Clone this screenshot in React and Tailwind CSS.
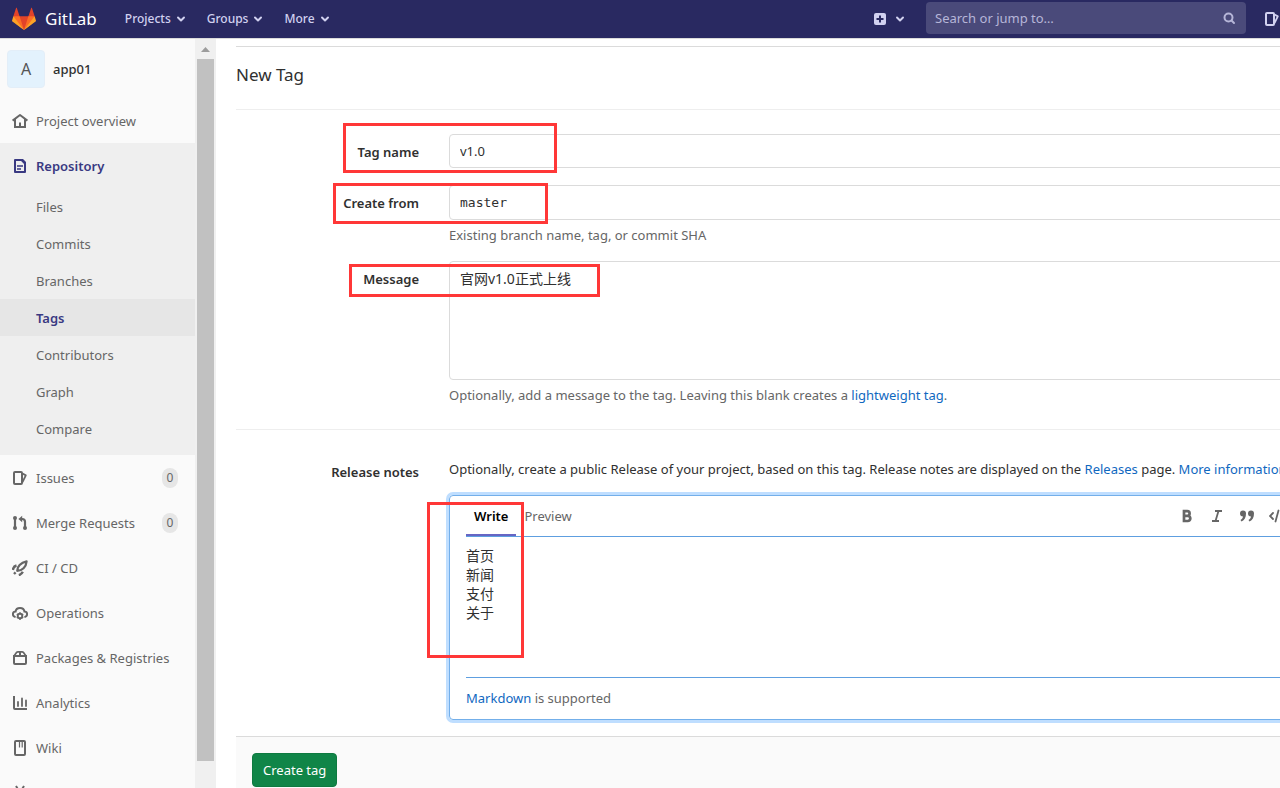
import React, { useState } from 'react';
import clsx from 'clsx';

const Icon = ({ children, className = 'size-4' }) => (
  <svg viewBox="0 0 16 16" className={clsx('shrink-0', className)} fill="none" stroke="currentColor" strokeWidth="2" aria-hidden="true">
    {children}
  </svg>
);

const icons = {
  home: (
    <>
      <path d="M0.6 7.6 8 2l7.4 5.6" strokeLinejoin="round" />
      <path d="M3 6v8h10V6" />
      <path d="M8 9.5V14" />
    </>
  ),
  doc: (
    <>
      <path d="M3 2h6.5L13 5.5V14H3z" strokeLinejoin="round" />
      <path d="M5 8h6M5 11h4" strokeWidth="1.6" />
      <path d="M9 1l5 5V4l-3-3z" fill="currentColor" stroke="none" />
    </>
  ),
  issues: (
    <>
      <rect x="2" y="2" width="8" height="12" rx="1" />
      <path d="M10.500 3.500l3.300 1.900-3.300 6.800" strokeWidth="1.800" strokeLinejoin="round" />
    </>
  ),
  merge: (
    <>
      <path d="M3 4v8M8 4h2.2C12 4 13 5 13 6.800V12" strokeWidth="2.200" />
      <path d="M10.200 0.800v6.400L6.400 4z" fill="currentColor" stroke="none" />
      <circle cx="3" cy="3" r="2" fill="currentColor" stroke="none" />
      <circle cx="3" cy="13" r="2" fill="currentColor" stroke="none" />
      <circle cx="13" cy="13" r="2" fill="currentColor" stroke="none" />
    </>
  ),
  rocket: (
    <>
      <path d="M5.200 10.800C5.200 7 8.500 2.400 14.600 1.400 14.200 7 10 10.800 5.200 10.800z" strokeWidth="2.200" strokeLinejoin="round" />
      <path d="M4.500 5.500C2.500 6 1.200 7.500 0.800 10M10.800 11.800C10 13.500 9 14.600 6.800 15.200M3.600 12.400L2 14" strokeWidth="2.400" />
    </>
  ),
  cloud: (
    <>
      <path d="M2.800 11.800C-0.200 10.500 0.600 6.500 3.600 6.500 4.200 1.700 11.800 1.700 12.400 6.500c3 0 3.800 4 .8 5.300" strokeLinecap="round" />
      <circle cx="8" cy="11" r="2.300" strokeWidth="1.900" />
      <path d="M8 7.300v1.500M8 13.300v1.700M4.800 9.200l1.300.7M9.900 12.100l1.300.7M4.800 12.800l1.300-.7M9.900 9.900l1.300-.7" strokeWidth="1.500" />
    </>
  ),
  package: (
    <>
      <path d="M2 6h12v7a1 1 0 0 1-1 1H3a1 1 0 0 1-1-1z" />
      <path d="M2 6l2.500-3.500C5 1.800 5.500 1.800 6 1.800h4c.5 0 1 0 1.500.7L14 6" strokeWidth="1.700" />
      <path d="M8 2v4" />
    </>
  ),
  chart: (
    <>
      <path d="M2 1v12a1 1 0 0 0 1 1h12" />
      <path d="M6 7v4M10 3.500V11M14 5.500V11" strokeLinecap="round" strokeWidth="1.800" />
    </>
  ),
  book: (
    <>
      <rect x="3" y="1" width="10" height="14" rx="1" />
      <path d="M7.500 1.500V7.500M10.200 1.500V7.500" strokeWidth="1.200" />
    </>
  ),
  snippet: (
    <>
      <path d="M4 1l6 10M12 1L6 11" />
      <circle cx="4" cy="13" r="2" />
      <circle cx="12" cy="13" r="2" />
    </>
  ),
};

const repoLinks = ['Files', 'Commits', 'Branches', 'Tags', 'Contributors', 'Graph', 'Compare'];

const lowerLinks = [
  { label: 'Issues', icon: 'issues', count: 0 },
  { label: 'Merge Requests', icon: 'merge', count: 0 },
  { label: 'CI / CD', icon: 'rocket' },
  { label: 'Operations', icon: 'cloud' },
  { label: 'Packages & Registries', icon: 'package' },
  { label: 'Analytics', icon: 'chart' },
  { label: 'Wiki', icon: 'book' },
];

const Tanuki = () => (
  <svg viewBox="0 0 36 36" className="size-6" aria-hidden="true">
    <path fill="#e24329" d="M2 14l9.38 9v-9l-4-12.28c-.205-.632-1.176-.632-1.38 0z" />
    <path fill="#e24329" d="M34 14l-9.38 9v-9l4-12.28c.205-.632 1.176-.632 1.38 0z" />
    <path fill="#e24329" d="M18 34.38L3 14h30z" />
    <path fill="#fc6d26" d="M18 34.38L11.38 14H2l4 11z" />
    <path fill="#fc6d26" d="M18 34.38L24.62 14H34l-4 11z" />
    <path fill="#fca326" d="M2 14L.1 20.16c-.18.565 0 1.2.5 1.56L18 34.38z" />
    <path fill="#fca326" d="M34 14l1.9 6.16c.18.565 0 1.2-.5 1.56L18 34.38z" />
  </svg>
);

const Chevron = () => (
  <Icon className="size-3">
    <path d="M4 6l4 4 4-4" strokeWidth="2.600" strokeLinecap="round" strokeLinejoin="round" />
  </Icon>
);

const Navbar = () => (
  <header className="flex h-[39px] shrink-0 items-center border-b border-[#dbdbdb] bg-[#292961] pl-3 text-[#d1d1f0]">
    <a href="#" className="flex items-center gap-[9px] text-[17px] text-white">
      <Tanuki />
      GitLab
    </a>
    <nav className="ml-7 flex gap-5">
      {['Projects', 'Groups', 'More'].map((item) => (
        <button key={item} type="button" className="flex items-center gap-1 text-xs font-medium">
          {item}
          <Chevron />
        </button>
      ))}
    </nav>
    <button type="button" aria-label="New" className="ml-auto flex items-center gap-[6px]">
      <Icon>
        <rect x="2" y="2" width="12" height="12" rx="2" fill="currentColor" stroke="none" />
        <path d="M8 4.500v7M4.500 8h7" stroke="#292961" />
      </Icon>
      <Chevron />
    </button>
    <div className="mb-[2px] ml-5 flex h-8 w-80 items-center rounded bg-[#4a4a7a] px-[9px]">
      <input
        type="text"
        aria-label="Search or jump to"
        placeholder="Search or jump to…"
        className="min-w-0 flex-1 bg-transparent outline-none placeholder:text-[#b6b6d8]"
      />
      <Icon className="size-4 text-[#b6b6d8]">
        <circle cx="7.500" cy="7.500" r="4" />
        <path d="M10.500 10.500l2.500 2.500" strokeLinecap="round" />
      </Icon>
    </div>
    <a href="#" aria-label="Issues" className="mr-12 ml-[18px]">
      <Icon>{icons.issues}</Icon>
    </a>
  </header>
);

const Sidebar = () => (
  <aside className="flex w-[216px] shrink-0 overflow-hidden bg-[#fafafa]">
    <nav className="min-w-0 flex-1 text-[#666]">
      <a href="#" className="flex h-[59px] items-center gap-2 pl-[7px] font-medium text-[#303030]">
        <span className="flex size-[38px] items-center justify-center rounded border border-[#e3eef8] bg-[#e3f2fd] text-base font-normal text-[#555]">
          A
        </span>
        app01
      </a>
      <a href="#" className="flex h-[45px] items-center gap-2 pl-3">
        <Icon>{icons.home}</Icon>
        Project overview
      </a>
      <div className="bg-[#efefef] pb-2">
        <a href="#" className="flex h-[45px] items-center gap-2 pl-3 font-semibold text-[#393982]">
          <Icon>{icons.doc}</Icon>
          Repository
        </a>
        {repoLinks.map((label) => (
          <a
            key={label}
            href="#"
            className={clsx('flex h-[37px] items-center pl-9', label === 'Tags' && 'bg-[#e6e6e6] font-semibold text-[#393982]')}
          >
            {label}
          </a>
        ))}
      </div>
      {lowerLinks.map(({ label, icon, count }) => (
        <a key={label} href="#" className="flex h-[45px] items-center gap-2 pr-[17px] pl-3">
          <Icon>{icons[icon]}</Icon>
          {label}
          {count !== undefined && (
            <span className="ml-auto flex h-5 w-4 items-center justify-center rounded-full bg-[#e6e6e6] text-xs">{count}</span>
          )}
        </a>
      ))}
      <a href="#" aria-label="Snippets" className="flex h-[45px] items-center pl-3">
        <Icon>{icons.snippet}</Icon>
      </a>
    </nav>
    {/* Scrollbar */}
    <div className="flex w-[21px] flex-col items-center bg-[#f0f0f0]">
      <svg viewBox="0 0 17 20" className="h-5 w-[17px] shrink-0" aria-hidden="true">
        <path d="M4 13h9L8.500 8z" fill="#9c9c9c" />
      </svg>
      <div className="mb-[27px] w-[17px] flex-1 bg-[#c1c1c1]" />
    </div>
  </aside>
);

// Red frame drawn over the part of the form that needs attention
const Highlight = ({ className }) => (
  <div className={clsx('pointer-events-none absolute border-3 border-[#ff3737]', className)} />
);

const Row = ({ label, htmlFor, labelClass, className, children }) => (
  <div className={clsx('relative flex gap-[30px]', className)}>
    <label htmlFor={htmlFor} className={clsx('w-[183px] shrink-0 text-right font-semibold text-[#303030]', labelClass)}>
      {label}
    </label>
    <div className="min-w-0 flex-1">{children}</div>
  </div>
);

const Link = ({ children }) => (
  <a href="#" className="text-[#1068bf]">
    {children}
  </a>
);

const fieldClass = 'block w-full rounded border border-[#dbdbdb] px-[10px] text-[#303030] outline-none';

const Toolbar = () => (
  <div className="mr-[26px] flex items-center gap-[14px] text-[#666]">
    <button type="button" aria-label="Bold">
      <Icon>
        <path d="M5 3.200h3.300a2.200 2.200 0 0 1 0 4.600H5zM5 8h3.800a2.400 2.400 0 0 1 0 5H5z" strokeWidth="2.700" />
      </Icon>
    </button>
    <button type="button" aria-label="Italic">
      <Icon>
        <path d="M6 3h7M3 13h7M9.500 3l-3 10" strokeWidth="1.800" />
      </Icon>
    </button>
    <button type="button" aria-label="Quote">
      <Icon>
        <g fill="currentColor" stroke="none">
          <path d="M4 2.500a3 3 0 0 1 3 3c0 4-1.500 6.800-4.500 8L1.500 12C3 11 3.800 10 4 8.500a3 3 0 0 1 0-6z" />
          <path d="M12 2.500a3 3 0 0 1 3 3c0 4-1.500 6.800-4.500 8L9.500 12c1.500-1 2.300-2 2.500-3.500a3 3 0 0 1 0-6z" />
        </g>
      </Icon>
    </button>
    <button type="button" aria-label="Code">
      <Icon>
        <path d="M4 5L1 8l3 3M12 5l3 3-3 3M9.500 2.500l-3 11" strokeWidth="1.800" strokeLinecap="round" />
      </Icon>
    </button>
  </div>
);

const NewTagForm = () => {
  const [tab, setTab] = useState('Write');

  return (
    <main className="min-w-0 flex-1 pt-[7px] pl-5">
      <h1 className="flex h-16 items-center border-y border-t-[#dbdbdb] border-b-[#eee] pb-[6px] text-[17px] text-[#303030]">
        New Tag
      </h1>
      <form onSubmit={(e) => e.preventDefault()}>
        <Row label="Tag name" htmlFor="tag_name" labelClass="leading-9" className="mt-6">
          <input id="tag_name" type="text" defaultValue="v1.0" className={clsx(fieldClass, 'h-[34px]')} />
          <Highlight className="-top-[11px] left-[107px] h-[50px] w-[214px]" />
        </Row>
        <Row label="Create from" htmlFor="ref" labelClass="leading-9" className="mt-[15px]">
          <input id="ref" type="text" defaultValue="master" className={clsx(fieldClass, "h-[35px] font-['DejaVu_Sans_Mono',monospace]")} />
          <p className="mt-[5px] text-[#666]">Existing branch name, tag, or commit SHA</p>
          <Highlight className="-top-[2px] left-[97px] h-[41px] w-[215px]" />
        </Row>
        <Row label="Message" htmlFor="message" labelClass="leading-9" className="mt-4">
          <textarea
            id="message"
            defaultValue="官网v1.0正式上线"
            className={clsx(fieldClass, 'h-[119px] resize-none pt-[7px] text-sm leading-5')}
          />
          <p className="mt-[5px] text-[#666]">
            Optionally, add a message to the tag. Leaving this blank creates a <Link>lightweight tag</Link>.
          </p>
          <Highlight className="top-[3px] left-[113px] h-[33px] w-[251px]" />
        </Row>
        <hr className="mt-6 border-[#eee]" />
        <Row label="Release notes" htmlFor="release_notes" labelClass="pt-8">
          <p className="pt-[29px] whitespace-nowrap text-[#303030]">
            Optionally, create a public Release of your project, based on this tag. Release notes are displayed on the{' '}
            <Link>Releases</Link> page. <Link>More information</Link>
          </p>
          <div className="mt-4 rounded border border-[#73afea] px-4 ring-3 ring-[#bfdeff]">
            <div className="flex h-[41px] justify-between border-b border-[#5e9fe0]">
              <div className="flex">
                {['Write', 'Preview'].map((name) => (
                  <button
                    key={name}
                    type="button"
                    onClick={() => setTab(name)}
                    className={clsx(
                      'h-10 border-b-2 px-2 pt-[2px]',
                      tab === name ? 'border-[#6666c4] font-semibold text-black' : 'border-transparent text-[#666]'
                    )}
                  >
                    {name}
                  </button>
                ))}
              </div>
              <Toolbar />
            </div>
            <textarea
              id="release_notes"
              defaultValue={'首页\n新闻\n支付\n关于'}
              className="block h-[140px] w-full resize-none pt-[9px] text-sm leading-[19px] text-[#303030] outline-none"
            />
            <div className="border-t border-[#5e9fe0] pt-[10px] pb-[11px] text-[#666]">
              <Link>Markdown</Link> is supported
            </div>
          </div>
          <Highlight className="top-[72px] left-[191px] h-[156px] w-[97px]" />
        </Row>
        <div className="mt-4 border-t border-[#dbdbdb] bg-[#fafafa] p-4">
          <button type="submit" className="h-[34px] rounded border border-[#0e7a40] bg-[#108548] px-[10px] text-white">
            Create tag
          </button>
        </div>
      </form>
    </main>
  );
};

export default function App() {
  return (
    <div className="h-screen overflow-hidden bg-white font-['Noto_Sans','Noto_Sans_CJK_SC',sans-serif] text-[13px] leading-5">
      {/* The page runs a little past the right edge of the window */}
      <div className="-mr-12 flex h-full flex-col">
        <Navbar />
        <div className="flex min-h-0 flex-1">
          <Sidebar />
          <NewTagForm />
        </div>
      </div>
    </div>
  );
}
